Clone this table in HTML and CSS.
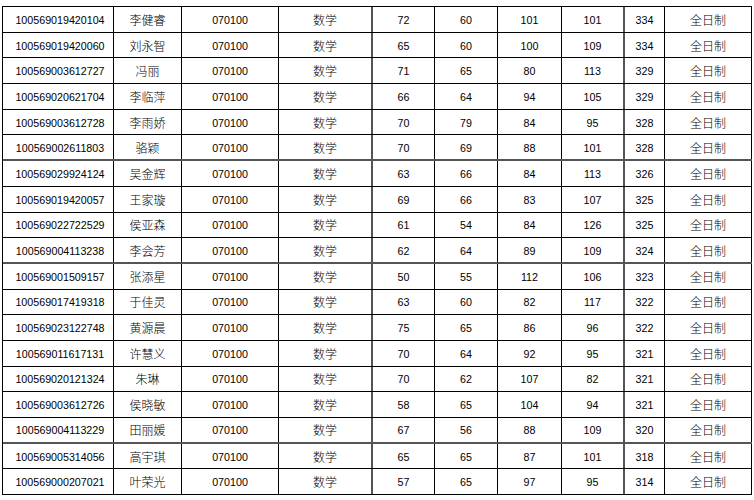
FILE: index.html
```html
<!DOCTYPE html>
<html lang="zh">
<head>
<meta charset="utf-8">
<title>成绩表</title>
<link rel="stylesheet" href="styles.css">
</head>
<body>
<div class="sheet">
  <div class="row"><div>100569019420104</div><div class="cn">李健睿</div><div>070100</div><div class="cn vt">数学</div><div>72</div><div>60</div><div>101</div><div class="vt">101</div><div>334</div><div class="cn">全日制</div></div>
  <div class="row"><div>100569019420060</div><div class="cn">刘永智</div><div>070100</div><div class="cn vt">数学</div><div>65</div><div>60</div><div>100</div><div class="vt">109</div><div>334</div><div class="cn">全日制</div></div>
  <div class="row"><div>100569003612727</div><div class="cn">冯丽</div><div>070100</div><div class="cn vt">数学</div><div>71</div><div>65</div><div>80</div><div class="vt">113</div><div>329</div><div class="cn">全日制</div></div>
  <div class="row"><div>100569020621704</div><div class="cn">李临萍</div><div>070100</div><div class="cn vt">数学</div><div>66</div><div>64</div><div>94</div><div class="vt">105</div><div>329</div><div class="cn">全日制</div></div>
  <div class="row"><div>100569003612728</div><div class="cn">李雨娇</div><div>070100</div><div class="cn vt">数学</div><div>70</div><div>79</div><div>84</div><div class="vt">95</div><div>328</div><div class="cn">全日制</div></div>
  <div class="row sep"><div>100569002611803</div><div class="cn">骆颖</div><div>070100</div><div class="cn vt">数学</div><div>70</div><div>69</div><div>88</div><div class="vt">101</div><div>328</div><div class="cn">全日制</div></div>
  <div class="row"><div>100569029924124</div><div class="cn">吴金辉</div><div>070100</div><div class="cn vt">数学</div><div>63</div><div>66</div><div>84</div><div class="vt">113</div><div>326</div><div class="cn">全日制</div></div>
  <div class="row"><div>100569019420057</div><div class="cn">王家璇</div><div>070100</div><div class="cn vt">数学</div><div>69</div><div>66</div><div>83</div><div class="vt">107</div><div>325</div><div class="cn">全日制</div></div>
  <div class="row"><div>100569022722529</div><div class="cn">侯亚森</div><div>070100</div><div class="cn vt">数学</div><div>61</div><div>54</div><div>84</div><div class="vt">126</div><div>325</div><div class="cn">全日制</div></div>
  <div class="row sep"><div>100569004113238</div><div class="cn">李会芳</div><div>070100</div><div class="cn vt">数学</div><div>62</div><div>64</div><div>89</div><div class="vt">109</div><div>324</div><div class="cn">全日制</div></div>
  <div class="row"><div>100569001509157</div><div class="cn">张添星</div><div>070100</div><div class="cn vt">数学</div><div>50</div><div>55</div><div>112</div><div class="vt">106</div><div>323</div><div class="cn">全日制</div></div>
  <div class="row"><div>100569017419318</div><div class="cn">于佳灵</div><div>070100</div><div class="cn vt">数学</div><div>63</div><div>60</div><div>82</div><div class="vt">117</div><div>322</div><div class="cn">全日制</div></div>
  <div class="row"><div>100569023122748</div><div class="cn">黄源晨</div><div>070100</div><div class="cn vt">数学</div><div>75</div><div>65</div><div>86</div><div class="vt">96</div><div>322</div><div class="cn">全日制</div></div>
  <div class="row"><div>100569011617131</div><div class="cn">许慧义</div><div>070100</div><div class="cn vt">数学</div><div>70</div><div>64</div><div>92</div><div class="vt">95</div><div>321</div><div class="cn">全日制</div></div>
  <div class="row"><div>100569020121324</div><div class="cn">朱琳</div><div>070100</div><div class="cn vt">数学</div><div>70</div><div>62</div><div>107</div><div class="vt">82</div><div>321</div><div class="cn">全日制</div></div>
  <div class="row"><div>100569003612726</div><div class="cn">侯晓敏</div><div>070100</div><div class="cn vt">数学</div><div>58</div><div>65</div><div>104</div><div class="vt">94</div><div>321</div><div class="cn">全日制</div></div>
  <div class="row sep"><div>100569004113229</div><div class="cn">田丽媛</div><div>070100</div><div class="cn vt">数学</div><div>67</div><div>56</div><div>88</div><div class="vt">109</div><div>320</div><div class="cn">全日制</div></div>
  <div class="row"><div>100569005314056</div><div class="cn">高宇琪</div><div>070100</div><div class="cn vt">数学</div><div>65</div><div>65</div><div>87</div><div class="vt">101</div><div>318</div><div class="cn">全日制</div></div>
  <div class="row"><div>100569000207021</div><div class="cn">叶荣光</div><div>070100</div><div class="cn vt">数学</div><div>57</div><div>65</div><div>97</div><div class="vt">95</div><div>314</div><div class="cn">全日制</div></div>
</div>
</body>
</html>
```

FILE: styles.css
```css
html, body {
  margin: 0;
  padding: 0;
  background: #ffffff;
}

body {
  padding: 6px 0 0 2px;
  font-family: "Liberation Sans", "Noto Sans CJK SC", sans-serif;
  font-size: 10.7px;
  color: #000;
}

.sheet {
  width: 749px;
  border-top: 1px solid #000;
  border-left: 1px solid #000;
  display: flex;
  flex-direction: column;
}

.row {
  display: grid;
  grid-template-columns: 111px 68px 97px 94px 62px 63px 64px 63px 40px 87px;
  height: 25.7px;
  box-sizing: border-box;
  border-bottom: 1px solid #000;
}

.row.sep {
  border-bottom: 2px solid #555;
}

.row > div {
  border-right: 1px solid #000;
  display: flex;
  align-items: center;
  justify-content: center;
  white-space: nowrap;
  padding-top: 1px;
}

.row > div:first-child {
  padding-left: 4px;
}

.row > div.vt {
  border-right: 2px solid #555;
}

.row > div.cn {
  font-family: "Noto Sans CJK SC", sans-serif;
  font-size: 12px;
  font-weight: 300;
  padding-top: 0;
}
```
